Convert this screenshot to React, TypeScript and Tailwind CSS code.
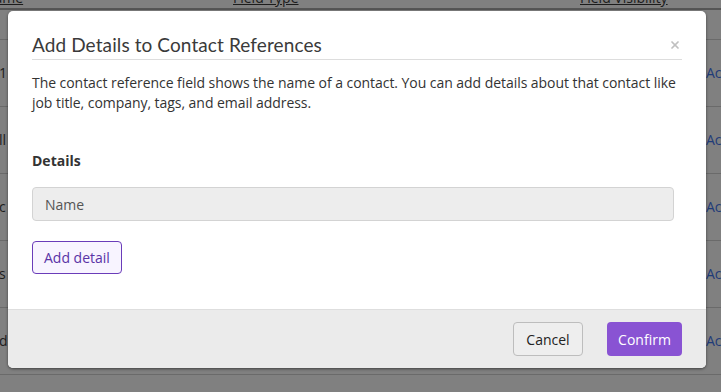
import { X } from 'lucide-react'

const rows = ['1', 'll', 'c', 's', 'd']

function BackdropTable() {
  return (
    <div className="w-[721px] h-[392px] bg-[#808080] font-['Open_Sans',sans-serif] text-[14px]">
      {/* header, mostly hidden above the fold */}
      <div className="h-[10px] border-b-2 border-[#555] relative overflow-hidden">
        <div className="flex items-end h-[10px] text-[#1c1c1c] leading-none">
          <span className="absolute -left-[16px] -top-[9px] underline">Name</span>
          <span className="absolute left-[233px] -top-[9px] underline">Field Type</span>
          <span className="absolute left-[580px] -top-[9px] underline">Field Visibility</span>
        </div>
      </div>
      <div className="h-[30px] border-b border-[#6a6a6a]" />
      {rows.map((r) => (
        <div key={r} className="h-[67px] border-b border-[#6a6a6a] flex items-center justify-between">
          <span className="text-[#1c1c1c] -ml-[1px] -mt-[2px]">{r}</span>
          <span className="text-[#1f3b78] w-[15px] overflow-hidden whitespace-nowrap -mt-[2px]">Actions</span>
        </div>
      ))}
    </div>
  )
}

export default function App() {
  return (
    <div className="relative w-[721px] h-[392px] overflow-hidden">
      <BackdropTable />

      {/* Modal */}
      <div className="absolute left-[8px] top-[11px] w-[698px] h-[357px] bg-white rounded-[5px] shadow-[0_1px_3px_rgba(0,0,0,0.5)] overflow-hidden flex flex-col font-['Open_Sans',sans-serif]">
        <div className="px-[24px] pt-[21px] flex-1">
          <div className="flex items-center justify-between border-b border-[#dddddd] pb-[1px]">
            <h2 className="font-['Lato',sans-serif] text-[19px] leading-[26px] text-[#3a3a3a] tracking-[0.1px]">
              Add Details to Contact References
            </h2>
            <X className="w-[12px] h-[12px] text-[#c0c0c0] mr-[1px]" strokeWidth={3.5} />
          </div>

          <p className="mt-[13px] text-[14px] leading-[20px] text-[#333] tracking-[-0.05px]">
            The contact reference field shows the name of a contact. You can add details about that contact like job title, company, tags, and email address.
          </p>

          <h3 className="mt-[38px] text-[14px] leading-[20px] font-bold text-[#333]">Details</h3>

          <div className="mt-[16px] w-[642px] h-[34px] bg-[#ededed] border border-[#d3d3d3] rounded-[4px] flex items-center px-[12px] text-[14px] text-[#555]">
            Name
          </div>

          <button className="mt-[20px] h-[33px] px-[11px] border border-[#6a3cb9] bg-[#f8f4ff] rounded-[4px] text-[14px] text-[#5a33a6]">
            Add detail
          </button>
        </div>

        <div className="h-[59px] bg-[#ebebeb] border-t border-[#dedede] flex items-center justify-end gap-[24px] pr-[24px]">
          <button className="h-[34px] w-[70px] border border-[#bdbdbd] bg-[#eeeeee] rounded-[4px] text-[14px] text-[#222]">
            Cancel
          </button>
          <button className="h-[34px] w-[75px] bg-[#8953d3] rounded-[4px] text-[14px] text-white">
            Confirm
          </button>
        </div>
      </div>
    </div>
  )
}
